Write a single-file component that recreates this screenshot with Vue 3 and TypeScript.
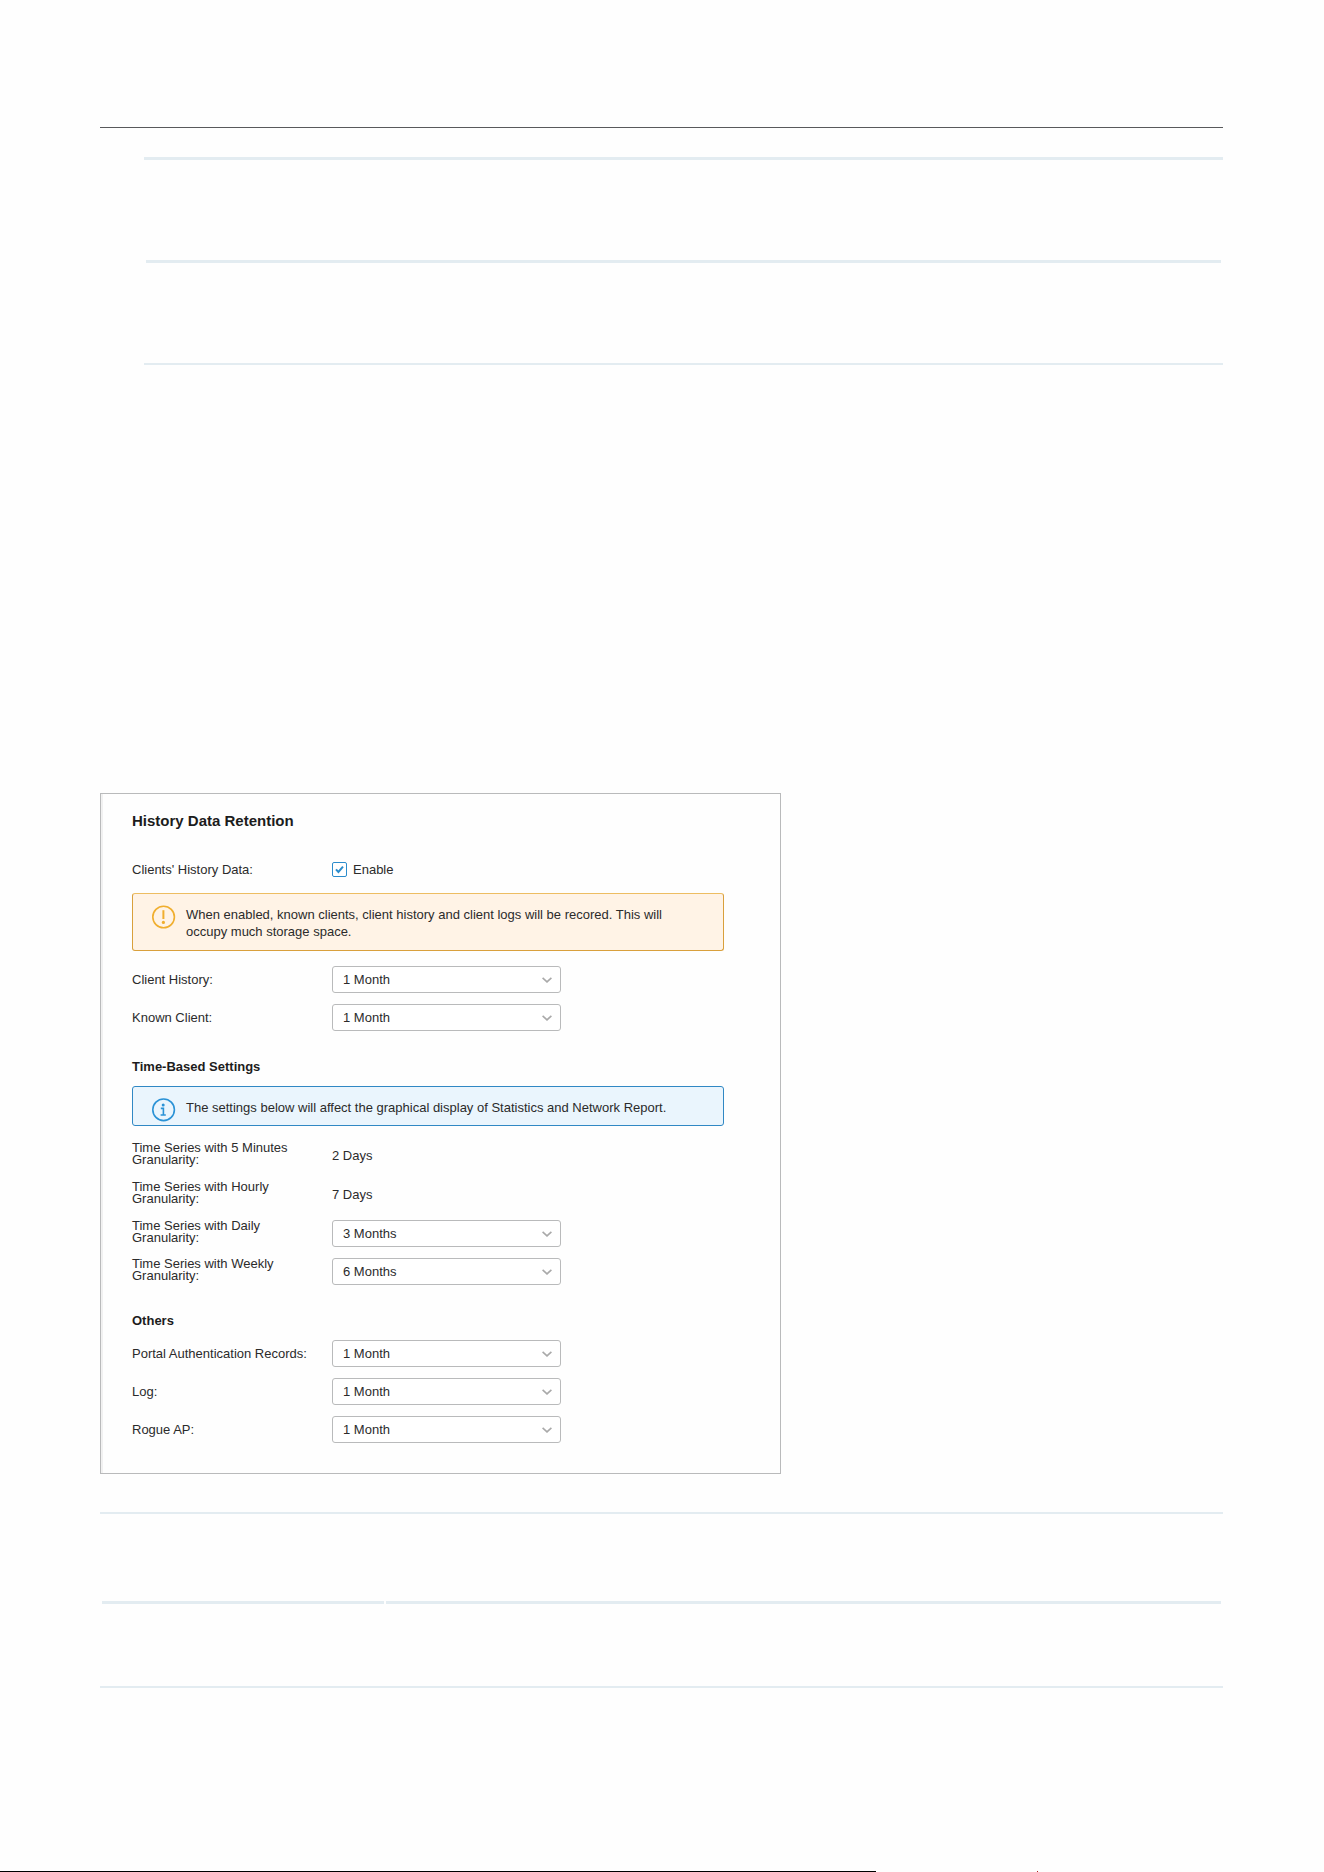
<script setup lang="ts">
import { reactive, ref } from 'vue'

interface Field {
  id: string
  label: string
  options?: string[]
  fixed?: string
}

const periods = ['1 Month', '3 Months', '6 Months', '12 Months']

const clientFields: Field[] = [
  { id: 'client-history', label: 'Client History:', options: periods },
  { id: 'known-client', label: 'Known Client:', options: periods },
]

const seriesFields: Field[] = [
  { id: 'series-minutes', label: 'Time Series with 5 Minutes Granularity:', fixed: '2 Days' },
  { id: 'series-hourly', label: 'Time Series with Hourly Granularity:', fixed: '7 Days' },
  { id: 'series-daily', label: 'Time Series with Daily Granularity:', options: periods },
  { id: 'series-weekly', label: 'Time Series with Weekly Granularity:', options: periods },
]

const otherFields: Field[] = [
  { id: 'portal-records', label: 'Portal Authentication Records:', options: periods },
  { id: 'log', label: 'Log:', options: periods },
  { id: 'rogue-ap', label: 'Rogue AP:', options: periods },
]

const sections = [
  { title: '', note: '', fields: clientFields },
  {
    title: 'Time-Based Settings',
    note: 'The settings below will affect the graphical display of Statistics and Network Report.',
    fields: seriesFields,
  },
  { title: 'Others', note: '', fields: otherFields },
]

const historyEnabled = ref(true)
const values = reactive<Record<string, string>>({
  'client-history': '1 Month',
  'known-client': '1 Month',
  'series-daily': '3 Months',
  'series-weekly': '6 Months',
  'portal-records': '1 Month',
  log: '1 Month',
  'rogue-ap': '1 Month',
})
</script>

<template>
  <div class="page">
    <header class="page-head"></header>

    <div class="grid-rules upper">
      <div class="rule thick"></div>
      <div class="rule thick inset"></div>
      <div class="rule"></div>
    </div>

    <main class="panel">
      <h1>History Data Retention</h1>

      <div class="row">
        <span class="label">Clients' History Data:</span>
        <label class="check">
          <input v-model="historyEnabled" type="checkbox" />
          <svg v-if="historyEnabled" viewBox="0 0 15 15" aria-hidden="true">
            <path d="M4 7.4 6.4 10 11 4.6" />
          </svg>
          <span>Enable</span>
        </label>
      </div>

      <div class="alert warning">
        <svg viewBox="0 0 24 24" aria-hidden="true">
          <circle cx="11.6" cy="12" r="10.8" />
          <path d="M11.4 5.2v8.8" />
          <circle class="dot" cx="11.4" cy="17.4" r="1.6" />
        </svg>
        <p>
          When enabled, known clients, client history and client logs will be recored. This will
          occupy much storage space.
        </p>
      </div>

      <section v-for="section in sections" :key="section.title" :class="{ series: section.note }">
        <h2 v-if="section.title">{{ section.title }}</h2>
        <div v-if="section.note" class="alert info">
          <svg viewBox="0 0 24 24" aria-hidden="true">
            <circle cx="11.6" cy="11.8" r="10.8" />
            <circle class="dot" cx="11.2" cy="7" r="1.5" />
            <path d="M8.8 10.4h2.6v6.6M8.6 17h5.2" />
          </svg>
          <p>{{ section.note }}</p>
        </div>
        <div v-for="field in section.fields" :key="field.id" class="row" :class="{ fixed: field.fixed }">
          <template v-if="field.options">
            <label class="label" :for="field.id">{{ field.label }}</label>
            <span class="select">
              <select :id="field.id" v-model="values[field.id]">
                <option v-for="option in field.options" :key="option">{{ option }}</option>
              </select>
              <svg viewBox="0 0 10 6" aria-hidden="true"><path d="M.6.8 5 4.8 9.4.8" /></svg>
            </span>
          </template>
          <template v-else>
            <span class="label">{{ field.label }}</span>
            <span class="value">{{ field.fixed }}</span>
          </template>
        </div>
      </section>
    </main>

    <div class="grid-rules lower">
      <div class="rule"></div>
      <div class="rule thick inset split"></div>
      <div class="rule"></div>
    </div>

    <footer class="page-foot">
      <span class="bar"></span>
      <span class="tick"></span>
    </footer>
  </div>
</template>

<style>
body {
  background: #fefefe;
}
</style>

<style scoped>
.page {
  box-sizing: border-box;
  display: flex;
  flex-direction: column;
  min-height: 100vh;
  padding-top: 127px;
  font-family: 'Liberation Sans', Arial, sans-serif;
  font-size: 13px;
  color: #2b2b2b;
}

.page-head {
  margin: 0 101px 0 100px;
  border-top: 1px solid #58595b;
}

.grid-rules {
  display: flex;
  flex-direction: column;
}

.upper {
  gap: 100px;
  margin: 29px 101px 0 144px;
}

.lower {
  margin: 38px 101px 0 100px;
}

.rule {
  height: 2px;
  background: #e3ecf1;
}

.rule.thick {
  height: 3px;
}

.rule.inset {
  margin: 0 2px;
}

.rule.split {
  display: flex;
  margin: 87px 2px 82px;
}

.rule.split::before {
  content: '';
  width: 2px;
  margin-left: 282px;
  background: #fefefe;
}

.panel {
  box-sizing: border-box;
  max-width: 681px;
  margin: 428px 101px 0 100px;
  padding: 15px 56px 30px 31px;
  border: 1px solid #b9babb;
  box-shadow: inset 2px 0 #f1f1f1;
}

h1,
h2,
p {
  margin: 0;
}

h1 {
  margin-bottom: 23px;
  font-size: 15px;
  line-height: 24px;
  color: #1c1c1c;
}

h2 {
  margin: 26px 0 9px;
  font-size: 13px;
  line-height: 20px;
  color: #1c1c1c;
}

.row {
  display: flex;
  align-items: center;
  gap: 14px;
  min-height: 27px;
}

.row + .row {
  margin-top: 11px;
}

.row.fixed + .row {
  margin-top: 12px;
}

.label {
  flex: none;
  width: 186px;
  line-height: 12px;
}

.series .label {
  align-self: flex-start;
}

.check {
  position: relative;
  display: flex;
  align-items: center;
  gap: 6px;
}

.check input {
  appearance: none;
  box-sizing: border-box;
  width: 15px;
  height: 15px;
  margin: 0;
  border: 1px solid #2b8ccc;
  border-radius: 2px;
  background: #fff;
}

.check svg {
  position: absolute;
  left: 0;
  width: 15px;
  height: 15px;
  fill: none;
  stroke: #2b8ccc;
  stroke-width: 2;
  pointer-events: none;
}

.alert {
  box-sizing: border-box;
  display: flex;
  align-items: flex-start;
  gap: 10px;
  padding: 11px 38px 0 19px;
  border: 1px solid;
  border-radius: 3px;
  line-height: 17px;
}

.alert svg {
  flex: none;
  width: 24px;
  height: 24px;
  fill: none;
  stroke-width: 1.6;
}

.alert p {
  margin-top: 1px;
}

.warning {
  min-height: 58px;
  margin: 10px 0 15px;
  border-color: #edbd62 #d9a03c #d9a03c;
  background: #fff3e6;
}

.warning svg {
  stroke: #f0ae2e;
}

.warning path {
  stroke-width: 2;
}

.warning .dot {
  fill: #f0ae2e;
  stroke: none;
}

.info {
  min-height: 40px;
  margin-bottom: 16px;
  border-color: #3088c4;
  background: #eaf5fd;
}

.info svg {
  stroke: #2a92d6;
}

.info .dot {
  fill: #2a92d6;
  stroke: none;
}

.select {
  position: relative;
  flex: 0 1 229px;
}

select {
  appearance: none;
  display: block;
  box-sizing: border-box;
  width: 100%;
  height: 27px;
  padding: 0 28px 0 10px;
  border: 1px solid #b9babb;
  border-radius: 3px;
  background: #fff;
  color: inherit;
  font: inherit;
}

.select svg {
  position: absolute;
  top: 11px;
  right: 9px;
  width: 10px;
  height: 6px;
  fill: none;
  stroke: #a9a9a9;
  stroke-width: 1.6;
  pointer-events: none;
}

.page-foot {
  display: flex;
  height: 1px;
  margin-top: auto;
}

.bar {
  width: 66.2%;
  background: #000;
}

.tick {
  width: 1px;
  margin-left: 12.1%;
  background: #b02020;
}
</style>
